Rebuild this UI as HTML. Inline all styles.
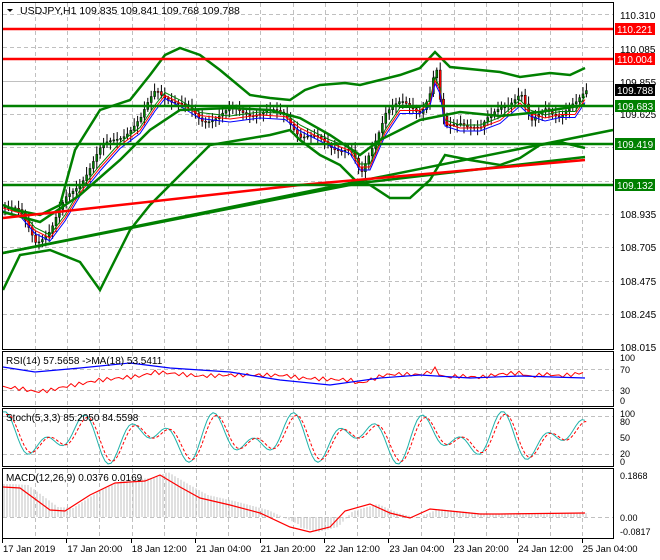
<!DOCTYPE html>
<html><head><meta charset="utf-8"><style>
html,body{margin:0;padding:0;background:#fff;}
svg{display:block;font-family:"Liberation Sans",sans-serif;}
</style></head><body>
<svg id="s" width="660" height="560" viewBox="0 0 660 560" xmlns="http://www.w3.org/2000/svg">
<rect width="660" height="560" fill="#fff"/>
<g id="grid" stroke="#c0c0c0" stroke-dasharray="4,3" stroke-width="1"></g>
<g id="cd"></g>
<g id="ov" fill="none"></g>
<g stroke="#000" fill="none" stroke-width="1">
<rect x="2.5" y="2.5" width="611" height="347"/>
<rect x="2.5" y="351.5" width="611" height="55"/>
<rect x="2.5" y="408.5" width="611" height="58"/>
<rect x="2.5" y="468.5" width="611" height="70"/>
</g>
<g font-size="10" fill="#000">
<text x="20" y="14" font-size="10.5">USDJPY,H1  109.835 109.841 109.768 109.788</text>
<polygon points="7,9 13,9 10,12" fill="#000"/>
<text x="6" y="364">RSI(14) 57.5658  -&gt;MA(18) 53.5411</text>
<text x="6" y="421">Stoch(5,3,3) 85.2050 84.5598</text>
<text x="6" y="481">MACD(12,26,9) 0.0376 0.0169</text>
</g>
<g id="ax" font-size="10" fill="#000"></g>
</svg>
<script>
const NS="http://www.w3.org/2000/svg";
function el(p,t,a,txt){const e=document.createElementNS(NS,t);for(const k in a)e.setAttribute(k,a[k]);if(txt!==undefined)e.textContent=txt;document.getElementById(p).appendChild(e);return e;}
function interp(pts,x){for(let i=0;i<pts.length-1;i++){if(x>=pts[i][0]&&x<=pts[i+1][0]){const t=(x-pts[i][0])/(pts[i+1][0]-pts[i][0]);return pts[i][1]+t*(pts[i+1][1]-pts[i][1]);}}return x<pts[0][0]?pts[0][1]:pts[pts.length-1][1];}
function pl(p,pts,st,w,da){el(p,'polyline',{points:pts.map(q=>q.join(',')).join(' '),stroke:st,'stroke-width':w,fill:'none','stroke-dasharray':da||'none'});}
// grid
for(let x=35;x<613;x+=32.2){const X=Math.round(x)+.5;el('grid','line',{x1:X,y1:3,x2:X,y2:349});el('grid','line',{x1:X,y1:352,x2:X,y2:406});el('grid','line',{x1:X,y1:409,x2:X,y2:466});el('grid','line',{x1:X,y1:469,x2:X,y2:538});}
[14,47,114,147,181,214,247,281,314].forEach(y=>el('grid','line',{x1:3,y1:y+.5,x2:613,y2:y+.5}));
el('grid','line',{x1:3,y1:81.5,x2:613,y2:81.5,stroke:'#c0c0c0','stroke-dasharray':'none'});
[369,390].forEach(y=>el('grid','line',{x1:3,y1:y+.5,x2:613,y2:y+.5}));
[416,454].forEach(y=>el('grid','line',{x1:3,y1:y+.5,x2:613,y2:y+.5}));
el('grid','line',{x1:3,y1:517.5,x2:613,y2:517.5});
// price path
const cp=[[3,205],[20,215],[35,240],[50,230],[65,200],[80,180],[100,150],[120,135],[140,120],[155,90],[165,95],[180,105],[200,120],[230,112],[260,112],[285,115],[300,135],[330,145],[350,150],[360,178],[370,150],[385,110],[400,105],[420,110],[430,90],[435,65],[440,110],[445,130],[460,120],[480,130],[500,105],[520,95],[530,125],[545,105],[560,118],[575,105],[585,88]];
const upper=[[3,205],[15,210],[40,215],[60,205],[75,150],[100,110],[130,100],[150,75],[165,55],[180,48],[200,55],[220,70],[250,95],[270,98],[290,100],[305,90],[320,85],[345,83],[360,85],[380,80],[400,75],[420,68],[435,52],[450,67],[480,70],[500,72],[520,77],[550,73],[570,75],[585,68]];
const lower=[[3,290],[20,255],[50,250],[80,262],[100,290],[115,260],[130,230],[150,205],[170,185],[190,165],[210,145],[240,140],[270,135],[290,130],[300,140],[320,155],[340,165],[355,180],[370,185],[390,198],[410,198],[430,180],[445,155],[470,160],[500,165],[520,158],[540,145],[560,142],[585,148]];
const mid=[[3,212],[40,222],[80,195],[120,160],[150,130],[180,110],[230,108],[270,110],[300,118],[330,135],[360,155],[380,140],[420,120],[460,112],[500,116],[540,112],[585,105]];
let prev=205;
for(let x=4;x<=586;x+=3.4){const c=interp(cp,x)+Math.sin(x*1.7)*4;const o=prev;const hi=Math.min(o,c)-2-Math.abs(Math.sin(x*3.1))*6;const lo=Math.max(o,c)+2+Math.abs(Math.cos(x*2.3))*6;
el('cd','line',{x1:x+1,y1:hi,x2:x+1,y2:lo,stroke:'#000','stroke-width':1});
const top=Math.min(o,c),h=Math.max(1,Math.abs(o-c));
el('cd','rect',{x:x,y:top,width:2,height:h,fill:c<o?'#008000':'#ff0000',stroke:'#000','stroke-width':0.5});prev=c;}
const ma=(off)=>cp.map((q,i)=>{const a=cp[Math.max(0,i-1)][1],b=q[1];return [q[0],(a+b)/2+off];});
pl('ov',ma(0),'#008000',1);pl('ov',ma(3),'#ff0000',1);pl('ov',ma(6),'#0000ff',1);
pl('ov',upper,'#008000',2.5);pl('ov',lower,'#008000',2.5);pl('ov',mid,'#008000',2.5);
pl('ov',[[3,253],[613,130]],'#008000',2.5);
pl('ov',[[3,253],[360,183],[585,157]],'#008000',2.5);
pl('ov',[[3,218],[300,185],[585,160]],'#ff0000',2.5);
[[29,'#ff0000'],[59,'#ff0000'],[106,'#008000'],[144,'#008000'],[185,'#008000']].forEach(a=>el('ov','line',{x1:3,y1:a[0],x2:613,y2:a[0],stroke:a[1],'stroke-width':2.5}));
[[110.310,19],[110.085,53],[109.855,86],[109.625,118],[108.935,218],[108.705,251],[108.475,285],[108.245,318],[108.015,351]].forEach(a=>el('ax','text',{x:620,y:a[1]},a[0].toFixed(3)));
[[29,'#ff0000','110.221','#fff'],[59,'#ff0000','110.004','#fff'],[90,'#000','109.788','#fff'],[106,'#008000','109.683','#fff'],[144,'#008000','109.419','#fff'],[185,'#008000','109.132','#fff']].forEach(a=>{el('ax','rect',{x:615,y:a[0]-6,width:40,height:12,fill:a[1]});el('ax','text',{x:617,y:a[0]+4,fill:a[3]},a[2]);});
[['100',361],['70',373],['30',394],['0',404],['100',417],['80',425],['50',441],['20',457],['0',465],['0.1868',479],['0.00',521],['-0.0817',535]].forEach(a=>el('ax','text',{x:620,y:a[1],'font-size':9},a[0]));
['17 Jan 2019','17 Jan 20:00','18 Jan 12:00','21 Jan 04:00','21 Jan 20:00','22 Jan 12:00','23 Jan 04:00','23 Jan 20:00','24 Jan 12:00','25 Jan 04:00'].forEach((t,i)=>{const x=3+i*64.4;el('ax','text',{x:x,y:552,'font-size':9.5},t);el('ax','line',{x1:Math.round(x)-.5,y1:539,x2:Math.round(x)-.5,y2:543,stroke:'#000'});});
const rsiY=v=>406-v/100*52;
const rsi=[];
for(let x=3;x<=586;x+=4){const c=interp(cp,x);let v=50+(150-c)*0.25+Math.sin(x*0.9)*4;rsi.push([x,rsiY(Math.max(25,Math.min(75,v)))]);}
pl('ov',rsi,'#ff0000',1);
pl('ov',[[3,367],[35,372],[80,368],[130,363],[170,368],[230,372],[280,380],[330,385],[380,378],[420,375],[470,378],[520,376],[585,378]],'#0000ff',1.2);
const st=[],sg=[];
const stY=v=>466-v/100*56;
for(let x=3;x<=586;x+=3){const v=50+48*Math.sin(x*0.12+1)*Math.cos(x*0.031);st.push([x,stY(Math.max(0,Math.min(100,v)))]);sg.push([x+3,stY(Math.max(0,Math.min(100,v*0.9+5)))]);}
pl('ov',st,'#20b2aa',1);pl('ov',sg,'#ff0000',1,'3,2');
const macd=[[3,487],[20,488],[50,510],[65,511],[90,495],[115,483],[145,481],[160,475],[180,487],[200,498],[230,505],[260,513],[290,527],[310,532],[330,527],[345,511],[370,504],[390,513],[410,518],[430,509],[450,511],[480,514],[500,514],[585,513]];
for(let x=4;x<=586;x+=3){const y=interp(macd,x-8)+(x<300?-3:0);el('ov','line',{x1:x,y1:517,x2:x,y2:y,stroke:'#c0c0c0','stroke-width':1});}
pl('ov',macd,'#ff0000',1.2);
</script>
</body></html>
